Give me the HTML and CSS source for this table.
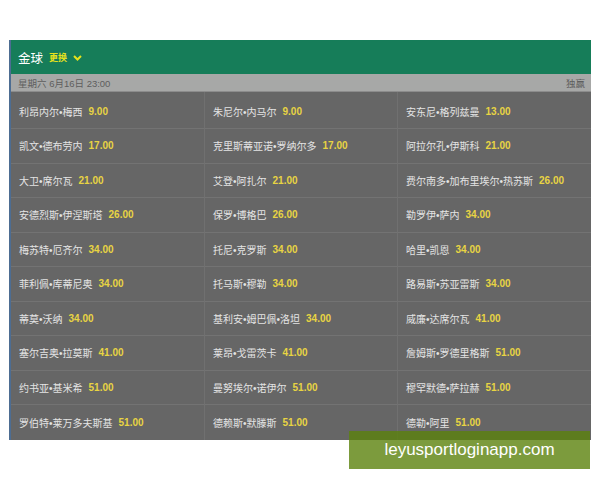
FILE: index.html
```html
<!DOCTYPE html>
<html lang="zh">
<head>
<meta charset="utf-8">
<title>金球</title>
<link rel="stylesheet" href="styles.css">
</head>
<body>
<div class="panel">
  <div class="head">
    <span class="title">金球</span>
    <span class="switch">更换</span>
    <svg class="chev" width="9" height="6" viewBox="0 0 9 6"><path d="M1 1 L4.5 4.5 L8 1" fill="none" stroke="#e6e21c" stroke-width="2"/></svg>
  </div>
  <div class="datebar">
    <span>星期六 6月16日 23:00</span>
    <span>独赢</span>
  </div>
  <div class="grid">
    <div class="cell"><span class="n">利昂内尔<b>•</b>梅西</span><span class="o">9.00</span></div>
    <div class="cell"><span class="n">朱尼尔<b>•</b>内马尔</span><span class="o">9.00</span></div>
    <div class="cell"><span class="n">安东尼<b>•</b>格列兹曼</span><span class="o">13.00</span></div>

    <div class="cell"><span class="n">凯文<b>•</b>德布劳内</span><span class="o">17.00</span></div>
    <div class="cell"><span class="n">克里斯蒂亚诺<b>•</b>罗纳尔多</span><span class="o">17.00</span></div>
    <div class="cell"><span class="n">阿拉尔孔<b>•</b>伊斯科</span><span class="o">21.00</span></div>

    <div class="cell"><span class="n">大卫<b>•</b>席尔瓦</span><span class="o">21.00</span></div>
    <div class="cell"><span class="n">艾登<b>•</b>阿扎尔</span><span class="o">21.00</span></div>
    <div class="cell"><span class="n">费尔南多<b>•</b>加布里埃尔<b>•</b>热苏斯</span><span class="o">26.00</span></div>

    <div class="cell"><span class="n">安德烈斯<b>•</b>伊涅斯塔</span><span class="o">26.00</span></div>
    <div class="cell"><span class="n">保罗<b>•</b>博格巴</span><span class="o">26.00</span></div>
    <div class="cell"><span class="n">勒罗伊<b>•</b>萨内</span><span class="o">34.00</span></div>

    <div class="cell"><span class="n">梅苏特<b>•</b>厄齐尔</span><span class="o">34.00</span></div>
    <div class="cell"><span class="n">托尼<b>•</b>克罗斯</span><span class="o">34.00</span></div>
    <div class="cell"><span class="n">哈里<b>•</b>凯恩</span><span class="o">34.00</span></div>

    <div class="cell"><span class="n">菲利佩<b>•</b>库蒂尼奥</span><span class="o">34.00</span></div>
    <div class="cell"><span class="n">托马斯<b>•</b>穆勒</span><span class="o">34.00</span></div>
    <div class="cell"><span class="n">路易斯<b>•</b>苏亚雷斯</span><span class="o">34.00</span></div>

    <div class="cell"><span class="n">蒂莫<b>•</b>沃纳</span><span class="o">34.00</span></div>
    <div class="cell"><span class="n">基利安<b>•</b>姆巴佩<b>•</b>洛坦</span><span class="o">34.00</span></div>
    <div class="cell"><span class="n">威廉<b>•</b>达席尔瓦</span><span class="o">41.00</span></div>

    <div class="cell"><span class="n">塞尔吉奥<b>•</b>拉莫斯</span><span class="o">41.00</span></div>
    <div class="cell"><span class="n">莱昂<b>•</b>戈雷茨卡</span><span class="o">41.00</span></div>
    <div class="cell"><span class="n">詹姆斯<b>•</b>罗德里格斯</span><span class="o">51.00</span></div>

    <div class="cell"><span class="n">约书亚<b>•</b>基米希</span><span class="o">51.00</span></div>
    <div class="cell"><span class="n">曼努埃尔<b>•</b>诺伊尔</span><span class="o">51.00</span></div>
    <div class="cell"><span class="n">穆罕默德<b>•</b>萨拉赫</span><span class="o">51.00</span></div>

    <div class="cell last"><span class="n">罗伯特<b>•</b>莱万多夫斯基</span><span class="o">51.00</span></div>
    <div class="cell last"><span class="n">德赖斯<b>•</b>默滕斯</span><span class="o">51.00</span></div>
    <div class="cell last"><span class="n">德勒<b>•</b>阿里</span><span class="o">51.00</span></div>
  </div>
</div>
<div class="watermark">leyusportloginapp.com</div>
</body>
</html>
```
FILE: styles.css
```css
html, body {
  margin: 0;
  padding: 0;
  background: #ffffff;
  width: 600px;
  height: 480px;
  overflow: hidden;
  font-family: "Liberation Sans", "Noto Sans CJK SC", sans-serif;
}

.panel {
  margin: 40px 9px 0 9px;
  width: 582px;
  border-left: 2px solid #4d6d92;
  box-sizing: border-box;
  background: #666666;
}

.head {
  height: 34px;
  background: #167d59;
  display: flex;
  align-items: center;
  padding-left: 7px;
  gap: 6px;
}

.title {
  color: #ffffff;
  font-size: 12.5px;
  margin-right: 0;
}

.switch {
  color: #e6e21c;
  font-size: 9px;
  font-weight: bold;
}

.chev {
  margin-left: 0;
  margin-top: 1px;
}

.datebar {
  height: 18px;
  background: #a7a8a7;
  border-bottom: 1px solid #8c8c8c;
  box-sizing: border-box;
  display: flex;
  justify-content: space-between;
  align-items: center;
  padding: 0 6px 0 7px;
  color: #5e5e5e;
  font-size: 9.5px;
}

.grid {
  display: grid;
  grid-template-columns: 194px 193px 193px;
  grid-template-rows: 37px repeat(9, 34.5px);
}

.cell {
  display: flex;
  align-items: center;
  gap: 6px;
  padding-left: 8px;
  border-bottom: 1px solid #737373;
  border-right: 1px solid #707070;
  box-sizing: border-box;
  white-space: nowrap;
}

.cell:nth-child(3n) {
  border-right: none;
}

.cell:first-child, .cell:nth-child(2), .cell:nth-child(3) {
  padding-top: 2px;
}

.cell.last {
  border-bottom: none;
}

.n {
  color: #e4e4e4;
  font-size: 10px;
}

.n b {
  font-weight: normal;
  font-family: "Liberation Sans", sans-serif;
}

.o {
  color: #e8d443;
  font-size: 10px;
  font-weight: bold;
}

.watermark {
  position: absolute;
  left: 349px;
  top: 431px;
  width: 241px;
  height: 38px;
  background: rgba(91, 130, 12, 0.8);
  color: #ffffff;
  font-family: "Liberation Sans", sans-serif;
  font-size: 17px;
  display: flex;
  align-items: center;
  justify-content: center;
}
```
